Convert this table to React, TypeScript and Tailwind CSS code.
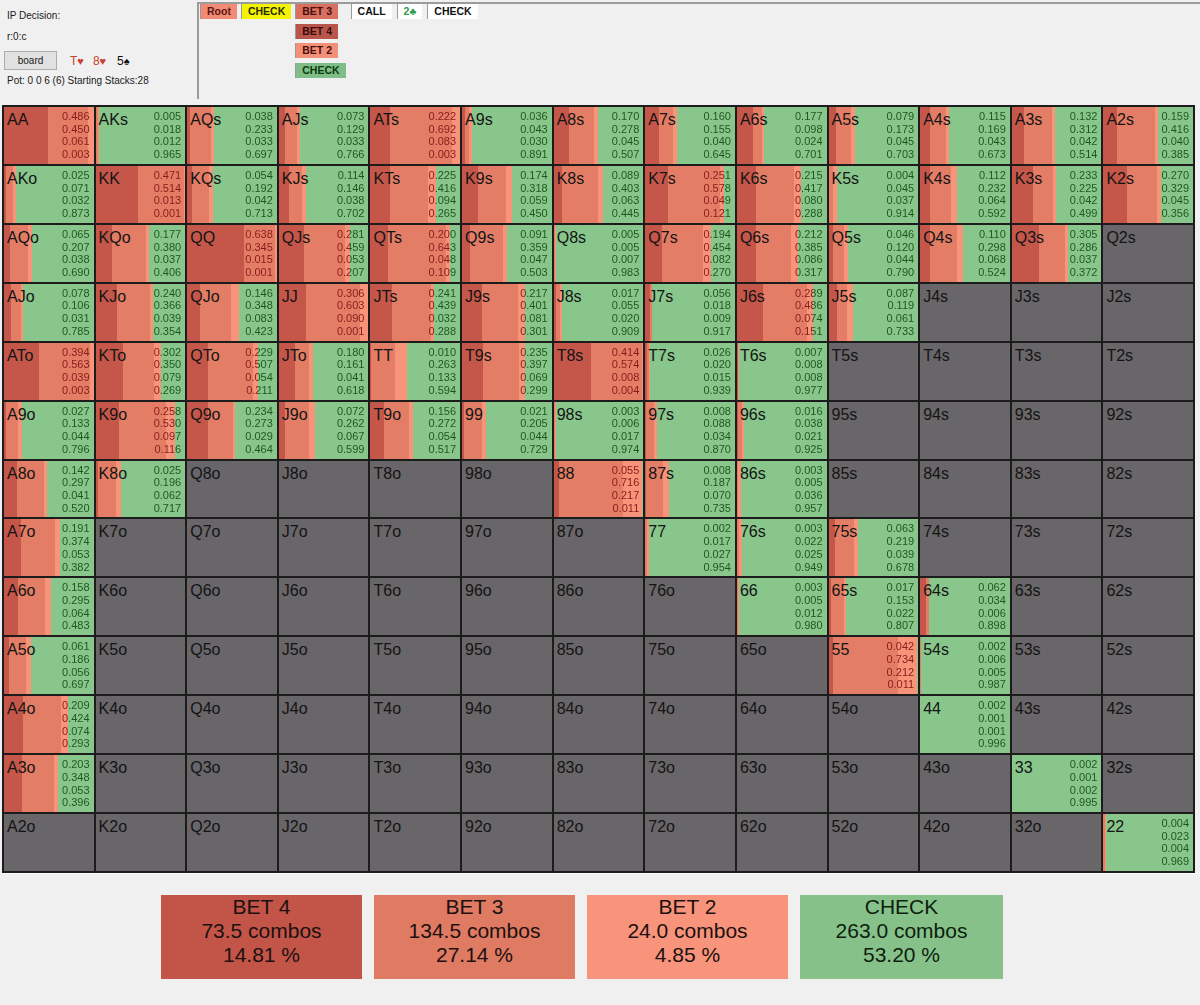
import React from 'react';

const RANKS = ['A', 'K', 'Q', 'J', 'T', '9', '8', '7', '6', '5', '4', '3', '2'];
const C4 = '#c5574a';
const C3 = '#e37d66';
const C2 = '#f8947a';
const CK = '#89c68c';
const TR = '#8a1a1a';
const TG = '#1b561b';

const D: Record<string, number[]> = {
  AA: [0.486, 0.45, 0.061, 0.003], AKs: [0.005, 0.018, 0.012, 0.965], AQs: [0.038, 0.233, 0.033, 0.697], AJs: [0.073, 0.129, 0.033, 0.766], ATs: [0.222, 0.692, 0.083, 0.003], A9s: [0.036, 0.043, 0.03, 0.891], A8s: [0.17, 0.278, 0.045, 0.507], A7s: [0.16, 0.155, 0.04, 0.645], A6s: [0.177, 0.098, 0.024, 0.701], A5s: [0.079, 0.173, 0.045, 0.703], A4s: [0.115, 0.169, 0.043, 0.673], A3s: [0.132, 0.312, 0.042, 0.514], A2s: [0.159, 0.416, 0.04, 0.385],
  AKo: [0.025, 0.071, 0.032, 0.873], KK: [0.471, 0.514, 0.013, 0.001], KQs: [0.054, 0.192, 0.042, 0.713], KJs: [0.114, 0.146, 0.038, 0.702], KTs: [0.225, 0.416, 0.094, 0.265], K9s: [0.174, 0.318, 0.059, 0.45], K8s: [0.089, 0.403, 0.063, 0.445], K7s: [0.251, 0.578, 0.049, 0.121], K6s: [0.215, 0.417, 0.08, 0.288], K5s: [0.004, 0.045, 0.037, 0.914], K4s: [0.112, 0.232, 0.064, 0.592], K3s: [0.233, 0.225, 0.042, 0.499], K2s: [0.27, 0.329, 0.045, 0.356],
  AQo: [0.065, 0.207, 0.038, 0.69], KQo: [0.177, 0.38, 0.037, 0.406], QQ: [0.638, 0.345, 0.015, 0.001], QJs: [0.281, 0.459, 0.053, 0.207], QTs: [0.2, 0.643, 0.048, 0.109], Q9s: [0.091, 0.359, 0.047, 0.503], Q8s: [0.005, 0.005, 0.007, 0.983], Q7s: [0.194, 0.454, 0.082, 0.27], Q6s: [0.212, 0.385, 0.086, 0.317], Q5s: [0.046, 0.12, 0.044, 0.79], Q4s: [0.11, 0.298, 0.068, 0.524], Q3s: [0.305, 0.286, 0.037, 0.372],
  AJo: [0.078, 0.106, 0.031, 0.785], KJo: [0.24, 0.366, 0.039, 0.354], QJo: [0.146, 0.348, 0.083, 0.423], JJ: [0.306, 0.603, 0.09, 0.001], JTs: [0.241, 0.439, 0.032, 0.288], J9s: [0.217, 0.401, 0.081, 0.301], J8s: [0.017, 0.055, 0.02, 0.909], J7s: [0.056, 0.018, 0.009, 0.917], J6s: [0.289, 0.486, 0.074, 0.151], J5s: [0.087, 0.119, 0.061, 0.733],
  ATo: [0.394, 0.563, 0.039, 0.003], KTo: [0.302, 0.35, 0.079, 0.269], QTo: [0.229, 0.507, 0.054, 0.211], JTo: [0.18, 0.161, 0.041, 0.618], TT: [0.01, 0.263, 0.133, 0.594], T9s: [0.235, 0.397, 0.069, 0.299], T8s: [0.414, 0.574, 0.008, 0.004], T7s: [0.026, 0.02, 0.015, 0.939], T6s: [0.007, 0.008, 0.008, 0.977],
  A9o: [0.027, 0.133, 0.044, 0.796], K9o: [0.258, 0.53, 0.097, 0.116], Q9o: [0.234, 0.273, 0.029, 0.464], J9o: [0.072, 0.262, 0.067, 0.599], T9o: [0.156, 0.272, 0.054, 0.517], '99': [0.021, 0.205, 0.044, 0.729], '98s': [0.003, 0.006, 0.017, 0.974], '97s': [0.008, 0.088, 0.034, 0.87], '96s': [0.016, 0.038, 0.021, 0.925],
  A8o: [0.142, 0.297, 0.041, 0.52], K8o: [0.025, 0.196, 0.062, 0.717], '88': [0.055, 0.716, 0.217, 0.011], '87s': [0.008, 0.187, 0.07, 0.735], '86s': [0.003, 0.005, 0.036, 0.957],
  A7o: [0.191, 0.374, 0.053, 0.382], '77': [0.002, 0.017, 0.027, 0.954], '76s': [0.003, 0.022, 0.025, 0.949], '75s': [0.063, 0.219, 0.039, 0.678],
  A6o: [0.158, 0.295, 0.064, 0.483], '66': [0.003, 0.005, 0.012, 0.98], '65s': [0.017, 0.153, 0.022, 0.807], '64s': [0.062, 0.034, 0.006, 0.898],
  A5o: [0.061, 0.186, 0.056, 0.697], '55': [0.042, 0.734, 0.212, 0.011], '54s': [0.002, 0.006, 0.005, 0.987],
  A4o: [0.209, 0.424, 0.074, 0.293], '44': [0.002, 0.001, 0.001, 0.996],
  A3o: [0.203, 0.348, 0.053, 0.396], '33': [0.002, 0.001, 0.002, 0.995],
  '22': [0.004, 0.023, 0.004, 0.969],
};

function handName(i: number, j: number) {
  if (i === j) return RANKS[i] + RANKS[j];
  if (j > i) return RANKS[i] + RANKS[j] + 's';
  return RANKS[j] + RANKS[i] + 'o';
}

function Cell({ name }: { name: string }) {
  const v = D[name];
  if (!v) {
    return (
      <div className="bg-[#686668] pl-[3px] pt-[4px] text-[16px] leading-[18px] text-[#141414]">{name}</div>
    );
  }
  const a = v[0] * 100;
  const b = (v[0] + v[1]) * 100;
  const c = (v[0] + v[1] + v[2]) * 100;
  const bg = `linear-gradient(to right, ${C4} 0%, ${C4} ${a}%, ${C3} ${a}%, ${C3} ${b}%, ${C2} ${b}%, ${C2} ${c}%, ${CK} ${c}%, ${CK} 100%)`;
  const txt = `linear-gradient(to right, ${TR} 0%, ${TR} ${c}%, ${TG} ${c}%, ${TG} 100%)`;
  return (
    <div className="grid" style={{ backgroundImage: bg }}>
      <span className="col-start-1 row-start-1 self-start justify-self-start pl-[3px] pt-[4px] text-[16px] leading-[18px] text-[#141414]">
        {name}
      </span>
      <div
        className="col-start-1 row-start-1 self-start bg-clip-text pr-[4px] pt-[3px] text-right text-[11px] leading-[12.7px] text-transparent"
        style={{ backgroundImage: txt }}
      >
        {v.map((x, k) => (
          <div key={k}>{x.toFixed(3)}</div>
        ))}
      </div>
    </div>
  );
}

function TreeBtn({ label, cls }: { label: React.ReactNode; cls: string }) {
  return (
    <div className={'h-[15px] border-l border-[#9a9a9a] px-[6px] text-[10.5px] font-bold leading-[15px] whitespace-nowrap ' + cls}>
      {label}
    </div>
  );
}

export default function App() {
  const cells: string[] = [];
  for (let i = 0; i < 13; i++) for (let j = 0; j < 13; j++) cells.push(handName(i, j));

  return (
    <div className="flex h-[1005px] w-[1200px] flex-col overflow-hidden bg-[#f0f0f0] font-['Liberation_Sans',Arial,sans-serif] text-[#111]">
      {/* Header */}
      <div className="flex h-[100px]">
        <div className="flex w-[197px] flex-col pl-[4px] text-[10px] text-[#1a1a1a]">
          <div className="ml-[3px] mt-[10px] leading-[12px]">IP Decision:</div>
          <div className="ml-[3px] mt-[9px] leading-[12px]">r:0:c</div>
          <div className="mt-[8px] flex items-center">
            <div className="flex h-[19px] w-[53px] items-center justify-center border border-[#adadad] bg-[#e1e1e1] leading-none">
              board
            </div>
            <span className="ml-[13px] text-[12px] text-[#c8402f]">T<span className="text-[11px]">♥</span></span>
            <span className="ml-[9px] text-[12px] text-[#c8402f]">8<span className="text-[11px]">♥</span></span>
            <span className="ml-[11px] text-[12px] text-[#111]">5<span className="text-[11px]">♠</span></span>
          </div>
          <div className="ml-[3px] mt-[5px] leading-[12px]">Pot: 0 0 6 (6) Starting Stacks:28</div>
        </div>
        <div className="mt-[2px] h-[97px] flex-1 border-l-2 border-t-2 border-[#9c9c9c] pl-px">
          <div className="flex items-start gap-[4px]">
            <TreeBtn label="Root" cls="bg-[#f08c75] text-[#5e1410]" />
            <TreeBtn label="CHECK" cls="bg-[#f4f400] text-[#2a2a00]" />
            <div className="flex flex-col items-start gap-[4.5px]">
              <TreeBtn label="BET 3" cls="bg-[#d8705f] text-[#4a0e0c]" />
              <TreeBtn label="BET 4" cls="bg-[#b9564c] text-[#3a0a08]" />
              <TreeBtn label="BET 2" cls="bg-[#f29078] text-[#4a0e0c]" />
              <TreeBtn label="CHECK" cls="bg-[#80be88] text-[#0c3a0c]" />
            </div>
            <div className="ml-px flex items-start gap-[5px]">
              <TreeBtn label="CALL" cls="bg-white text-[#111]" />
              <TreeBtn label="2♣" cls="bg-white text-[#2e9a4a]" />
              <TreeBtn label="CHECK" cls="bg-white text-[#111]" />
            </div>
          </div>
        </div>
      </div>

      {/* Grid */}
      <div className="pl-[2px] pt-[5px]">
        <div className="grid h-[768px] w-[1193px] grid-cols-[repeat(13,minmax(0,1fr))] grid-rows-[repeat(13,minmax(0,1fr))] gap-[2px] bg-[#1c1c1c] p-[2px]">
          {cells.map((n) => (
            <Cell key={n} name={n} />
          ))}
        </div>
      </div>
      <div className="h-px w-full bg-white" />

      {/* Summary */}
      <div className="flex gap-[12px] pl-[161px] pt-[21px]">
        <div className="flex h-[84px] w-[201px] flex-col items-center bg-[#c25548] text-[21px] leading-[24px] text-[#1c1010]">
          <div>BET 4</div>
          <div>73.5 combos</div>
          <div>14.81 %</div>
        </div>
        <div className="flex h-[84px] w-[201px] flex-col items-center bg-[#df7a63] text-[21px] leading-[24px] text-[#1c1010]">
          <div>BET 3</div>
          <div>134.5 combos</div>
          <div>27.14 %</div>
        </div>
        <div className="flex h-[84px] w-[201px] flex-col items-center bg-[#f8947b] text-[21px] leading-[24px] text-[#1c1010]">
          <div>BET 2</div>
          <div>24.0 combos</div>
          <div>4.85 %</div>
        </div>
        <div className="flex h-[84px] w-[203px] flex-col items-center bg-[#86c18a] text-[21px] leading-[24px] text-[#0e1e0e]">
          <div>CHECK</div>
          <div>263.0 combos</div>
          <div>53.20 %</div>
        </div>
      </div>
    </div>
  );
}
